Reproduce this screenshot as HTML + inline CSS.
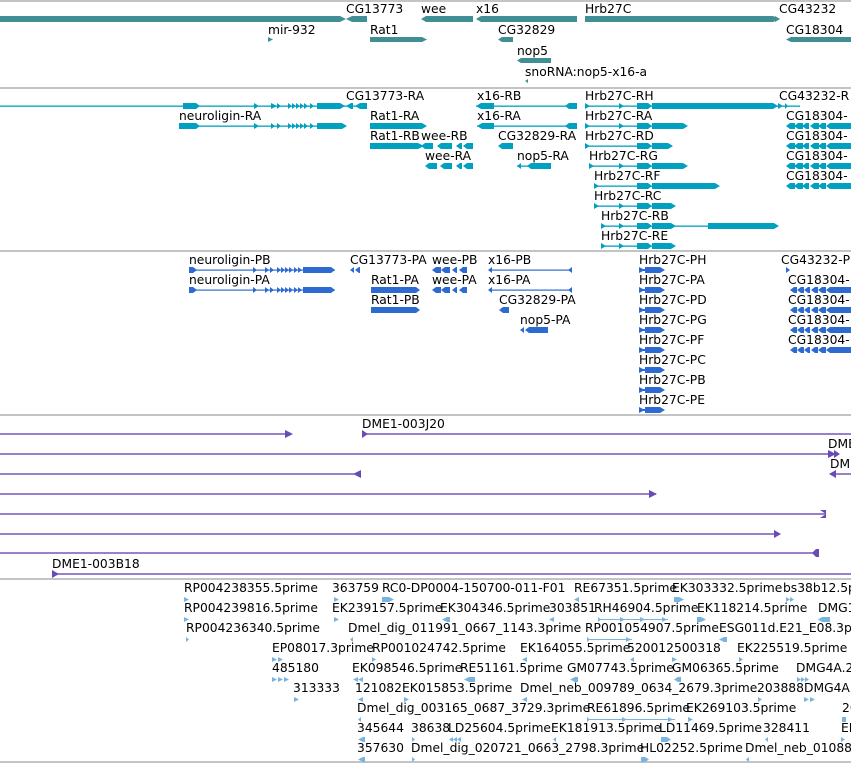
<!DOCTYPE html>
<html><head><meta charset="utf-8"><style>
html,body{margin:0;padding:0;background:#fff;width:851px;height:763px;overflow:hidden}
svg{display:block}
text{font-family:"DejaVu Sans","Liberation Sans",sans-serif;font-size:12.3px;fill:#000}
</style></head><body>
<svg width="851" height="763" viewBox="0 0 851 763" xmlns="http://www.w3.org/2000/svg">
<g stroke="#c4c4c4" stroke-width="2">
<line x1="0" y1="1" x2="851" y2="1"/><line x1="0" y1="88" x2="851" y2="88"/>
<line x1="0" y1="251" x2="851" y2="251"/><line x1="0" y1="415" x2="851" y2="415"/>
<line x1="0" y1="579" x2="851" y2="579"/><line x1="0" y1="762" x2="851" y2="762"/>
</g>

<!-- Track 1 genes -->
<g fill="#418f94">
<path d="M0 16H340L346 19L340 22H0Z"/><path d="M346 19L352 16H367V22H352Z"/>
<path d="M421 19L426 16H473V22H426Z"/><path d="M476 19L481 16H577V22H481Z"/>
<path d="M585 16H773L780 19L773 22H585Z"/><path d="M775 16L780 19L775 22Z"/>
<path d="M268 37L273 39.5L268 42Z"/>
<path d="M370 37H422L427 39.5L422 42H370Z"/>
<path d="M420 38H422L427 39.5L422 41H420Z"/>
<path d="M498 39.5L502 37H513V42H502Z"/>
<path d="M786 39.5L791 37H851V42H791Z"/>
<path d="M517 60.5L521 58H551V63H521Z"/>
<path d="M525 81L528 79V83Z"/>
</g>
<text x="346" y="13">CG13773</text><text x="421" y="13">wee</text><text x="476" y="13">x16</text>
<text x="585" y="13">Hrb27C</text><text x="779" y="13">CG43232</text>
<text x="268" y="34">mir-932</text><text x="370" y="34">Rat1</text><text x="498" y="34">CG32829</text>
<text x="786" y="34">CG18304</text><text x="517" y="55">nop5</text><text x="525" y="76">snoRNA:nop5-x16-a</text>

<!-- Track 2 transcripts -->
<g fill="#00a0c0" stroke="none">
<rect x="0" y="105.5" width="367" height="1.3"/>
<path d="M183 103H196L200 106L196 109H183Z"/>
<path d="M254 103L259 106L254 109Z"/><path d="M271 103L277 106L271 109H271Z"/><path d="M277 103L281 106L277 109Z"/>
<path d="M288 103L292 106L288 109Z M292 103L296 106L292 109Z M296 103L300 106L296 109Z M300 103L304 106L300 109Z M304 103L308 106L304 109Z M310 103L314 106L310 109Z"/>
<path d="M317 103H340L345 106L340 109H317Z"/><path d="M346 106L351 103H353V109H351Z"/><path d="M355 106L360 103H367V109H360Z"/>
<rect x="179" y="125.5" width="166" height="1.3"/>
<path d="M179 123H196L200 126L196 129H179Z"/>
<path d="M254 123L259 126L254 129Z M271 123L275 126L271 129Z M277 123L281 126L277 129Z M288 123L292 126L288 129Z M292 123L296 126L292 129Z M296 123L300 126L296 129Z M300 123L304 126L300 129Z M304 123L308 126L304 129Z M310 123L314 126L310 129Z"/>
<path d="M317 123H342L347 126L342 129H317Z"/>
<path d="M370 123H422L427 126L422 129H370Z"/>
<path d="M370 143H418L424 146L418 149H370Z"/>
<path d="M421 146L425 143H433V149H425Z M437 146L441 143H452V149H441Z M456 146L460 143H462V149H460Z M463 146L467 143H473V149H467Z"/>
<path d="M425 166L429 163H437V169H429Z M440 166L444 163H452V169H444Z M456 166L460 163H462V169H460Z M463 166L467 163H473V169H467Z"/>
<rect x="476" y="105.5" width="100" height="1.3"/><path d="M476 106L481 103H494V109H481Z M565 106L569 103H577V109H569Z"/>
<rect x="477" y="125.5" width="100" height="1.3"/><path d="M477 126L482 123H494V129H482Z M565 126L569 123H577V129H569Z"/>
<path d="M498 146L502 143H513V149H502Z"/>
<rect x="517" y="165.5" width="30" height="1.3"/><path d="M517 166L521 163V169Z M527 166L531 163H551V169H531Z"/>
<rect x="585" y="105.5" width="215" height="1.3"/>
<path d="M585 103L590 106L585 109Z M619 103L624 106L619 109Z M637 103H648L652 106L648 109H637Z M652 103H773L778 106L773 109H652Z M778 103L783 106L778 109Z M785 103L788 106L785 109Z"/>
<rect x="585" y="125.5" width="100" height="1.3"/>
<path d="M585 123L590 126L585 129Z M619 123L624 126L619 129Z M637 123H648L652 126L648 129H637Z M652 123H683L688 126L683 129H652Z"/>
<rect x="585" y="145.5" width="80" height="1.3"/>
<path d="M585 143L590 146L585 149Z M637 143H648L652 146L648 149H637Z M652 143H668L673 146L668 149H652Z"/>
<rect x="589" y="165.5" width="95" height="1.3"/>
<path d="M589 163L594 166L589 169Z M619 163L624 166L619 169Z M637 163H648L652 166L648 169H637Z M652 163H683L688 166L683 169H652Z"/>
<rect x="594" y="185.5" width="120" height="1.3"/>
<path d="M594 183L599 186L594 189Z M637 183H648L652 186L648 189H637Z M652 183H715L720 186L715 189H652Z"/>
<rect x="594" y="205.5" width="80" height="1.3"/>
<path d="M594 203L599 206L594 209Z M619 203L624 206L619 209Z M637 203H648L652 206L648 209H637Z M652 203H671L676 206L671 209H652Z"/>
<rect x="601" y="225.5" width="175" height="1.3"/>
<path d="M601 223L606 226L601 229Z M619 223L624 226L619 229Z M637 223H648L652 226L648 229H637Z M652 223H671L676 226L671 229H652Z M708 223H774L779 226L774 229H708Z"/>
<rect x="601" y="245.5" width="73" height="1.3"/>
<path d="M601 243L606 246L601 249Z M619 243L624 246L619 249Z M637 243H648L652 246L648 249H637Z M652 243H671L676 246L671 249H652Z"/>
<g id="cg"><path d="M786 126L790 123H795V129H790Z M794 126L798 123H803V129H798Z M802 126L806 123H809V129H806Z M810 126L814 123H819V129H814Z M818 126L822 123H826V129H822Z M826 126L830 123H851V129H830Z"/></g>
<use href="#cg" y="20"/><use href="#cg" y="40"/><use href="#cg" y="60"/>
</g>
<text x="346" y="100">CG13773-RA</text><text x="477" y="100">x16-RB</text><text x="585" y="100">Hrb27C-RH</text><text x="779" y="100">CG43232-R</text>
<text x="179" y="120">neuroligin-RA</text><text x="370" y="120">Rat1-RA</text><text x="477" y="120">x16-RA</text><text x="585" y="120">Hrb27C-RA</text><text x="786" y="120">CG18304-</text>
<text x="370" y="140">Rat1-RB</text><text x="421" y="140">wee-RB</text><text x="498" y="140">CG32829-RA</text><text x="585" y="140">Hrb27C-RD</text><text x="786" y="140">CG18304-</text>
<text x="425" y="160">wee-RA</text><text x="517" y="160">nop5-RA</text><text x="589" y="160">Hrb27C-RG</text><text x="786" y="160">CG18304-</text>
<text x="594" y="180">Hrb27C-RF</text><text x="786" y="180">CG18304-</text>
<text x="594" y="200">Hrb27C-RC</text><text x="601" y="220">Hrb27C-RB</text><text x="601" y="240">Hrb27C-RE</text>

<!-- Track 3 proteins -->
<g fill="#2d6bd0">
<rect x="189" y="269.5" width="146" height="1.2"/>
<path d="M189 267H193L197 270L193 273H189Z M253 267L257 270L253 273Z M265 267L269 270L265 273Z M270 267L274 270L270 273Z M277 267L281 270L277 273Z M281 267L285 270L281 273Z M285 267L289 270L285 273Z M289 267L293 270L289 273Z M294 267L298 270L294 273Z M298 267L302 270L298 273Z M303 267H331L335 270L331 273H303Z"/>
<rect x="189" y="289.5" width="146" height="1.2"/>
<path d="M189 287H193L197 290L193 293H189Z M253 287L257 290L253 293Z M265 287L269 290L265 293Z M270 287L274 290L270 293Z M277 287L281 290L277 293Z M281 287L285 290L281 293Z M285 287L289 290L285 293Z M289 287L293 290L289 293Z M294 287L298 290L294 293Z M298 287L302 290L298 293Z M303 287H331L335 290L331 293H303Z"/>
<path d="M350 270L354 267V273Z M355 270L359 267H360V273H359Z"/>
<path d="M432 270L436 267H441V273H436Z M441 270L445 267H450V273H445Z M452 270L456 267H457V273H456Z M459 270L463 267H467V273H463Z"/>
<path d="M432 290L436 287H441V293H436Z M441 290L445 287H450V293H445Z M452 290L456 287H457V293H456Z M459 290L463 287H467V293H463Z"/>
<path d="M371 287H416L420 290L416 293H371Z M371 307H416L420 310L416 313H371Z"/>
<rect x="489" y="269.5" width="83" height="1.2"/><path d="M488 270L492 267V273Z M568 270L572 267V273Z"/>
<rect x="489" y="289.5" width="83" height="1.2"/><path d="M488 290L492 287V293Z M568 290L572 287H572V293Z"/>
<path d="M499 310L503 307H509V313H503Z"/>
<path d="M520 330L524 327V333Z M525 330L529 327H548V333H529Z"/>
<g id="hp"><path d="M639 267L645 270L639 273Z M645 267H660L665 270L660 273H645Z"/><rect x="639" y="269" width="8" height="2"/></g>
<use href="#hp" y="20"/><use href="#hp" y="40"/><use href="#hp" y="60"/><use href="#hp" y="80"/><use href="#hp" y="100"/><use href="#hp" y="120"/><use href="#hp" y="140"/>
<path d="M786 267L790 270L786 273Z"/>
<g id="cp"><path d="M790 290L794 287H797V293H794Z M797 290L801 287H804V293H801Z M804 290L808 287H810V293H808Z M811 290L815 287H818V293H815Z M818 290L822 287H826V293H822Z M826 290L830 287H851V293H830Z"/></g>
<use href="#cp" y="20"/><use href="#cp" y="40"/><use href="#cp" y="60"/>
</g>
<text x="189" y="264">neuroligin-PB</text><text x="350" y="264">CG13773-PA</text><text x="432" y="264">wee-PB</text><text x="488" y="264">x16-PB</text><text x="639" y="264">Hrb27C-PH</text><text x="781" y="264">CG43232-P</text>
<text x="189" y="284">neuroligin-PA</text><text x="371" y="284">Rat1-PA</text><text x="432" y="284">wee-PA</text><text x="488" y="284">x16-PA</text><text x="639" y="284">Hrb27C-PA</text><text x="788" y="284">CG18304-</text>
<text x="371" y="304">Rat1-PB</text><text x="499" y="304">CG32829-PA</text><text x="639" y="304">Hrb27C-PD</text><text x="788" y="304">CG18304-</text>
<text x="520" y="324">nop5-PA</text><text x="639" y="324">Hrb27C-PG</text><text x="788" y="324">CG18304-</text>
<text x="639" y="344">Hrb27C-PF</text><text x="788" y="344">CG18304-</text>
<text x="639" y="364">Hrb27C-PC</text><text x="639" y="384">Hrb27C-PB</text><text x="639" y="404">Hrb27C-PE</text>

<!-- Track 4 -->
<g fill="#6a4bb3">
<rect x="0" y="433.3" width="290" height="1.4"/><path d="M285 430L293 434L285 438Z"/>
<rect x="362" y="433.3" width="489" height="1.4"/><path d="M362 430L368 434L362 438Z"/>
<rect x="0" y="453.3" width="836" height="1.4"/><path d="M828 450L836 454L828 458Z M834 450L840 454L834 458Z"/>
<rect x="0" y="473.3" width="360" height="1.4"/><path d="M353 474L361 470V478Z"/>
<rect x="830" y="473.3" width="21" height="1.4"/><path d="M829 474L836 470V478Z"/>
<rect x="0" y="493.3" width="656" height="1.4"/><path d="M649 490L657 494L649 498Z"/>
<rect x="0" y="513.3" width="826" height="1.4"/><path d="M820 510L826 514L820 518H826V510Z"/>
<rect x="0" y="533.3" width="780" height="1.4"/><path d="M774 530L781 534L774 538Z"/>
<rect x="0" y="552.3" width="819" height="1.4"/><path d="M812 553L816 549H819V557H816Z"/>
<rect x="52" y="573.3" width="799" height="1.4"/><path d="M52 570L59 574L52 578Z"/>
</g>
<text x="362" y="428">DME1-003J20</text><text x="828" y="448">DME</text><text x="830" y="468">DME</text><text x="52" y="568">DME1-003B18</text>

<!-- Track 5 ESTs -->
<g fill="#78b4e0">
<path d="M184 597L189 599.5L184 602Z M334 597L339 599.5L334 602Z M382 597H389L394 599.5L389 602H382Z M574 599.5L579 597V602Z M674 597H679L684 599.5L679 602H674Z M786 597L790 599.5L786 602Z M790 597L794 599.5L790 602Z"/>
<path d="M184 617L189 619.5L184 622Z M334 617L339 619.5L334 622Z M442 619.5L447 617H450V622H447Z M549 619.5L554 617V622Z M697 617H701L706 619.5L701 622H697Z M818 619.5L822 617H830V622H822Z"/>
<rect x="598" y="619" width="70" height="1"/><path d="M598 617L601 619.5L598 622Z M620 617L625 619.5L620 622Z M640 617L645 619.5L640 622Z M662 617L667 619.5L662 622Z"/>
<path d="M186 637L189 639.5L186 642Z M350 639.5L353 637V642Z"/>
<rect x="587" y="639" width="45" height="1"/><path d="M587 637L590 639.5L587 642Z M626 637L631 639.5L626 642Z"/>
<path d="M719 639.5L724 637H727V642H724Z"/>
<path d="M272 657L277 659.5L272 662Z M278 657L283 659.5L278 662Z M372 657L376 659.5L372 662Z M522 659.5L527 657V662Z M630 659.5L634 657V662Z M672 657L677 659.5L672 662Z M739 657L743 659.5L739 662Z"/>
<path d="M272 677L277 679.5L272 682Z M278 677L283 679.5L278 682Z M284 677L289 679.5L284 682Z M353 679.5L358 677V682Z M358 679.5L363 677V682Z M464 679.5L469 677H475V682H469Z M570 679.5L575 677H578V682H575Z M674 679.5L678 677H681V682H678Z M797 677L801 679.5L797 682Z M801 677L805 679.5L801 682Z M805 677L809 679.5L805 682Z"/>
<path d="M294 697L299 699.5L294 702H294Z M358 699.5L363 697V702Z M404 697L409 699.5L404 702Z M522 699.5L527 697V702Z M758 697L762 699.5L758 702Z M804 697L809 699.5L804 702Z M810 697L815 699.5L810 702Z"/>
<path d="M358 719.5L361 717V722Z M688 717L693 719.5L688 722Z M842 717H846V722H842Z"/>
<rect x="587" y="719" width="88" height="1"/><path d="M587 717L590 719.5L587 722Z M622 717L627 719.5L622 722Z M668 717L673 719.5L668 722Z"/>
<path d="M358 739.5L363 737H365V742H363Z M412 737L415 739.5L412 742Z M449 739.5L453 737V742Z M453 739.5L457 737V742Z M457 739.5L461 737V742Z M553 739.5L556 737V742Z M661 737H667L671 739.5L667 742H661Z M765 739.5L768 737V742Z M841 737L845 739.5L841 742Z"/>
<path d="M358 759.5L363 757H365V762H363Z M412 757L415 759.5L412 762Z M641 757H645L649 759.5L645 762H641Z M746 759.5L749 757V762Z"/>
</g>
<text x="184" y="592">RP004238355.5prime</text><text x="332" y="592">363759</text><text x="382" y="592">RC0-DP0004-150700-011-F01</text><text x="574" y="592">RE67351.5prime</text><text x="672" y="592">EK303332.5prime</text><text x="783" y="592">bs38b12.5prime</text>
<text x="184" y="612">RP004239816.5prime</text><text x="332" y="612">EK239157.5prime</text><text x="440" y="612">EK304346.5prime</text><text x="549" y="612">303851</text><text x="594" y="612">RH46904.5prime</text><text x="697" y="612">EK118214.5prime</text><text x="818" y="612">DMG1</text>
<text x="186" y="632">RP004236340.5prime</text><text x="348" y="632">Dmel_dig_011991_0667_1143.3prime</text><text x="585" y="632">RP001054907.5prime</text><text x="719" y="632">ESG011d.E21_E08.3prime</text>
<text x="272" y="652">EP08017.3prime</text><text x="372" y="652">RP001024742.5prime</text><text x="520" y="652">EK164055.5prime</text><text x="627" y="652">520012500318</text><text x="737" y="652">EK225519.5prime</text>
<text x="272" y="672">485180</text><text x="352" y="672">EK098546.5prime</text><text x="460" y="672">RE51161.5prime</text><text x="567" y="672">GM07743.5prime</text><text x="672" y="672">GM06365.5prime</text><text x="796" y="672">DMG4A.2_</text>
<text x="293" y="692">313333</text><text x="355" y="692">121082</text><text x="402" y="692">EK015853.5prime</text><text x="520" y="692">Dmel_neb_009789_0634_2679.3prime</text><text x="757" y="692">203888</text><text x="804" y="692">DMG4A.</text>
<text x="357" y="712">Dmel_dig_003165_0687_3729.3prime</text><text x="587" y="712">RE61896.5prime</text><text x="686" y="712">EK269103.5prime</text><text x="842" y="712">20</text>
<text x="357" y="732">345644</text><text x="411" y="732">38638</text><text x="448" y="732">LD25604.5prime</text><text x="551" y="732">EK181913.5prime</text><text x="659" y="732">LD11469.5prime</text><text x="763" y="732">328411</text><text x="841" y="732">EK</text>
<text x="357" y="752">357630</text><text x="411" y="752">Dmel_dig_020721_0663_2798.3prime</text><text x="640" y="752">HL02252.5prime</text><text x="745" y="752">Dmel_neb_010880</text>
</svg>
</body></html>
